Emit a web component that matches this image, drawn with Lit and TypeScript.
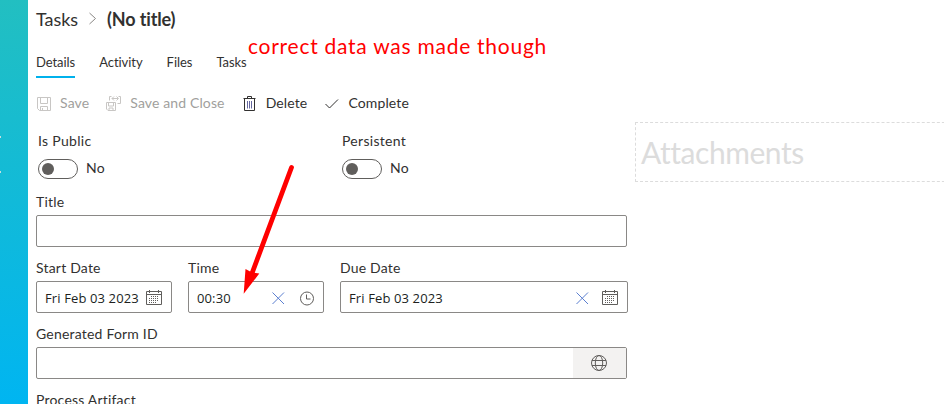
import { LitElement, html, svg, css } from "lit";
import { customElement, property } from "lit/decorators.js";

const icons: Record<string, unknown> = {
  save: svg`<path d="M1.500 2.500h13v13h-11l-2-2zM4.500 2.500v6h7v-6M4.500 15.500v-4h7v4M6.500 13v2.500"/>`,
  saveClose: svg`<path d="M.5 7.500h9v8h-7.500l-1.500-1.500zM2.500 7.500v3.500h5v-3.500M3 15.500v-2.500h4v2.500M3.500 5.500v-4h2M12.500 1.500h2v7h-3M6 3.500h6M8 1.500l-2 2 2 2M10.500 1.500l2 2-2 2"/>`,
  trash: svg`<path d="M1.500 3.500h12M5.500 3.500v-2h4v2M2.500 3.500v12h10v-12"/><path stroke="#6668a0" d="M5.500 6v7.500M7.500 6v7.500M9.500 6v7.500"/>`,
  check: svg`<path d="M1.500 9l4 4 8.500-8.500"/>`,
  cross: svg`<path d="M.5 1.500l11.500 11.500M12 1.500l-11.500 11.500"/>`,
  clock: svg`<circle cx="7" cy="8.500" r="6.500"/><path d="M6.500 4.500v4.500h4"/>`,
  calendar: svg`<path d="M.5 2.500h15v13h-15zM.5 5.500h15M3.500 1v3M12.500 1v3"/><path stroke-dasharray="1 1" d="M5 7.500h8M3 9.500h10M3 11.500h10M3 13.500h8"/>`,
  globe: svg`<circle cx="8" cy="8" r="7.500"/><ellipse cx="8" cy="8" rx="3.700" ry="7.500"/><path d="M1 5.500h14M1 10.500h14"/>`,
  chevron: svg`<path d="M.5 0l6 5.500-6 5.500"/>`,
};

@customElement("line-icon")
class LineIcon extends LitElement {
  @property() name = "";
  static styles = css`
    :host { display: block; flex: none; width: 16px; height: 16px; }
    svg { display: block; fill: none; stroke: currentColor; stroke-width: 1; overflow: visible; }
  `;
  render() {
    return html`<svg width="16" height="16" viewBox="0 0 16 16">${icons[this.name]}</svg>`;
  }
}

@customElement("toggle-field")
class ToggleField extends LitElement {
  @property() label = "";
  static styles = css`
    :host { display: block; flex: none; width: 304px; color: #323130; }
    .label { height: 20px; line-height: 20px; letter-spacing: .3px; }
    .row { display: flex; align-items: center; height: 20px; margin-top: 8px; gap: 8px; letter-spacing: .2px; }
    .track { box-sizing: border-box; width: 40px; height: 20px; border: 1px solid #605e5c; border-radius: 10px; padding: 3px; }
    .knob { width: 12px; height: 12px; border-radius: 50%; background: #605e5c; }
    .state { line-height: 18px; margin-top: -2px; }
  `;
  render() {
    return html`<div class="label">${this.label}</div>
      <div class="row"><div class="track"><div class="knob"></div></div><span class="state">No</span></div>`;
  }
}

@customElement("app-root")
class AppRoot extends LitElement {
  static styles = css`
    :host { display: flex; position: relative; width: 944px; height: 404px; overflow: hidden; background: #fff; color: #323130; font: 14px/20px Lato, sans-serif; white-space: nowrap; }
    .rail { flex: none; box-sizing: border-box; width: 28px; padding-top: 136px; background: linear-gradient(#22bfc1, #00b5f1); }
    .mark { width: 1px; height: 2px; background: #c7dfe0; margin-bottom: 33px; }
    .main { width: 592px; flex: none; margin-left: 8px; }
    .crumbs { display: flex; align-items: center; height: 38px; font-size: 18px; letter-spacing: -.05px; }
    .crumbs line-icon { width: 8px; height: 12px; margin: 0 10px 0 11px; color: #8a8886; }
    .crumbs b { letter-spacing: -.15px; }
    .tabs { display: flex; gap: 24px; height: 32px; margin-top: 8px; line-height: 32px; font-size: 13px; }
    .tab { box-sizing: border-box; height: 32px; letter-spacing: -.05px; }
    .on { border-bottom: 2px solid #00b1ec; }
    .commands { display: flex; align-items: center; height: 40px; margin-top: 5px; }
    .cmd { display: flex; align-items: center; gap: 8px; margin-right: 17px; letter-spacing: .13px; }
    .off { color: #a19f9d; }
    .off line-icon { color: #c8c6c4; }
    .toggles { display: flex; margin: 8px 0 0 2px; }
    .label { height: 20px; line-height: 20px; letter-spacing: .2px; }
    .box { box-sizing: border-box; display: flex; align-items: center; height: 32px; width: 591px; margin-top: 3px; border: 1px solid #8a8886; border-radius: 2px; padding-left: 8px; font: 13px/20px "Open Sans", sans-serif; letter-spacing: .12px; color: #201f1e; }
    .title { margin-top: 13px; }
    .dates { display: flex; gap: 16px; margin-top: 11px; }
    .dates .box { padding-right: 9px; }
    .w1 .box { width: 136px; }
    .w2 .box { width: 288px; }
    .grow { flex: 1; padding-top: 2px; }
    .box line-icon { color: #605e5c; }
    .box .clear { color: #5b7fd0; width: 13px; height: 13px; margin-right: 15px; }
    .w2 .box .clear { margin-right: 13px; }
    .box .clock { width: 14px; height: 14px; }
    .form { margin-top: 11px; }
    .form .box { padding: 0; }
    .addon { box-sizing: border-box; display: flex; align-items: center; justify-content: center; width: 53px; height: 30px; padding-right: 2px; background: #f3f2f1; }
    .last { margin-top: 11px; }
    .drop { box-sizing: border-box; width: 330px; height: 60px; flex: none; margin: 122px 0 0 7px; border: 1px dashed #dcdcdc; padding-left: 5px; line-height: 58px; font-size: 30px; font-variant-ligatures: none; letter-spacing: -.45px; color: #dcdcdc; }
    .note { position: absolute; left: 248px; top: 33px; font-size: 21px; line-height: 26px; letter-spacing: .74px; color: #f00; }
    .arrow { position: absolute; left: 0; top: 0; pointer-events: none; }
  `;
  render() {
    return html`
      <div class="rail"><div class="mark"></div><div class="mark"></div></div>
      <div class="main">
        <div class="crumbs"><span>Tasks</span><line-icon name="chevron"></line-icon><b>(No title)</b></div>
        <div class="tabs">${["Details", "Activity", "Files", "Tasks"].map((t, i) => html`<div class="tab ${i ? "" : "on"}">${t}</div>`)}</div>
        <div class="commands">
          <div class="cmd off"><line-icon name="save"></line-icon><span>Save</span></div>
          <div class="cmd off"><line-icon name="saveClose"></line-icon><span>Save and Close</span></div>
          <div class="cmd"><line-icon name="trash"></line-icon><span>Delete</span></div>
          <div class="cmd"><line-icon name="check"></line-icon><span>Complete</span></div>
        </div>
        <div class="toggles"><toggle-field label="Is Public"></toggle-field><toggle-field label="Persistent"></toggle-field></div>
        <div class="title"><div class="label">Title</div><div class="box"></div></div>
        <div class="dates">
          <div class="w1"><div class="label">Start Date</div><div class="box"><span class="grow">Fri Feb 03 2023</span><line-icon name="calendar"></line-icon></div></div>
          <div class="w1"><div class="label">Time</div><div class="box"><span class="grow">00:30</span><line-icon class="clear" name="cross"></line-icon><line-icon class="clock" name="clock"></line-icon></div></div>
          <div class="w2"><div class="label">Due Date</div><div class="box"><span class="grow">Fri Feb 03 2023</span><line-icon class="clear" name="cross"></line-icon><line-icon name="calendar"></line-icon></div></div>
        </div>
        <div class="form"><div class="label">Generated Form ID</div><div class="box"><span class="grow"></span><div class="addon"><line-icon name="globe"></line-icon></div></div></div>
        <div class="last"><div class="label">Process Artifact</div></div>
      </div>
      <div class="drop">Attachments</div>
      <div class="note">correct data was made though</div>
      <svg class="arrow" width="944" height="404">
        <path d="M291.500 167.500L251 276" stroke="#f00" stroke-width="4.800" stroke-linecap="round"/>
        <path d="M243.700 293.800L245.500 269L252 272.500L259.300 273.500z" fill="#f00"/>
      </svg>`;
  }
}
